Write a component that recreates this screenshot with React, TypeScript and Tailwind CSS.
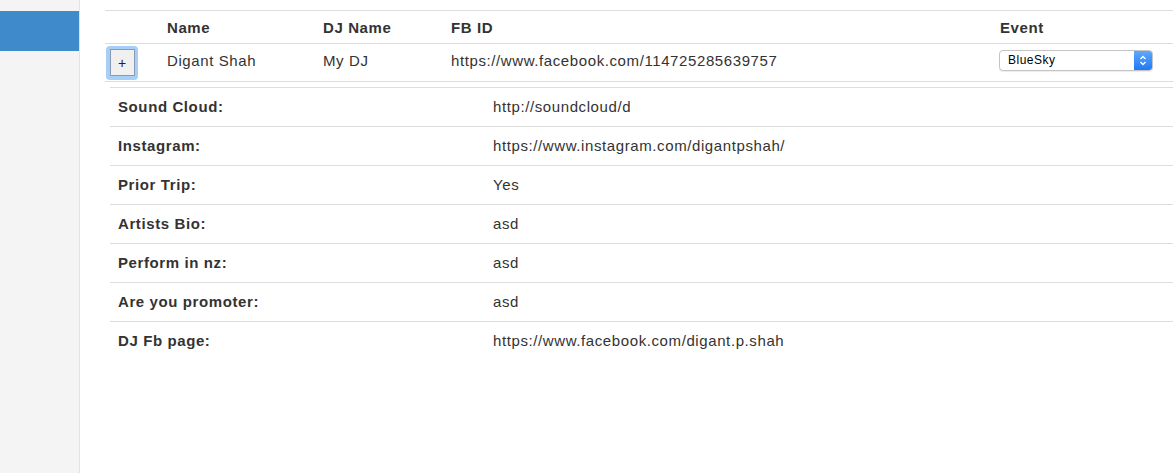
import React from "react";

const details = [
  { label: "Sound Cloud:", value: "http://soundcloud/d" },
  { label: "Instagram:", value: "https://www.instagram.com/digantpshah/" },
  { label: "Prior Trip:", value: "Yes" },
  { label: "Artists Bio:", value: "asd" },
  { label: "Perform in nz:", value: "asd" },
  { label: "Are you promoter:", value: "asd" },
  { label: "DJ Fb page:", value: "https://www.facebook.com/digant.p.shah" },
];

const App = () => {
  return (
    <div className="flex h-[473px] w-[1173px] overflow-hidden bg-white font-['Liberation_Sans',Arial,sans-serif] text-[15px] tracking-[0.6px] text-[#333]">
      <aside className="w-[80px] shrink-0 border-r border-[#e3e3e3] bg-[#f4f4f4] pt-[11px]">
        <div className="h-[40px] w-[79px] bg-[#3f8acb]" />
      </aside>

      <main className="flex-1 pl-[25px] pt-[10px]">
        <div className="border-t border-[#dddddd]">
          <div className="flex h-[33px] items-center border-b border-[#dddddd] pt-[2px] font-bold">
            <span className="w-[62px]" />
            <span className="w-[156px]">Name</span>
            <span className="w-[128px]">DJ Name</span>
            <span className="w-[549px]">FB ID</span>
            <span>Event</span>
          </div>

          <div className="flex h-[38px] items-center border-b border-[#dddddd]">
            <span className="w-[62px] pl-[1px]">
              <span className="flex h-[34px] w-[32px] items-center justify-center rounded-[4px] bg-[#a6cff7]">
                <span className="flex h-[27px] w-[25px] items-center justify-center border border-[#8a9bb0] bg-[#f0f0f0] text-[14px] leading-none tracking-normal text-[#222]">
                  +
                </span>
              </span>
            </span>
            <span className="w-[156px] pb-[2px]">Digant Shah</span>
            <span className="w-[128px] pb-[2px]">My DJ</span>
            <span className="w-[548px] pb-[2px]">https://www.facebook.com/114725285639757</span>
            <span className="mb-[5px] flex h-[21px] w-[154px] items-stretch overflow-hidden rounded-[4px] border border-[#c4c4c4] bg-white text-[12px] tracking-[0.5px] text-black shadow-[0_1px_1px_rgba(0,0,0,0.08)]">
              <span className="flex flex-1 items-center pl-[8px]">BlueSky</span>
              <span className="flex w-[18px] items-center justify-center bg-[linear-gradient(#5fa8fb,#1d7af7)]">
                <svg width="8" height="13" viewBox="0 0 8 13" fill="none" stroke="white" strokeWidth="1.4">
                  <path d="M1.5 5 L4 2.5 L6.5 5" />
                  <path d="M1.5 8 L4 10.5 L6.5 8" />
                </svg>
              </span>
            </span>
          </div>

          <div className="ml-[5px] mt-[5px] border-t border-[#dddddd]">
            {details.map((d, i) => (
              <div
                key={d.label}
                className={`flex h-[39px] items-center ${i < details.length - 1 ? "border-b border-[#dddddd]" : ""}`}
              >
                <span className="w-[383px] pl-[8px] font-bold">{d.label}</span>
                <span>{d.value}</span>
              </div>
            ))}
          </div>
        </div>
      </main>
    </div>
  );
};

export default App;
